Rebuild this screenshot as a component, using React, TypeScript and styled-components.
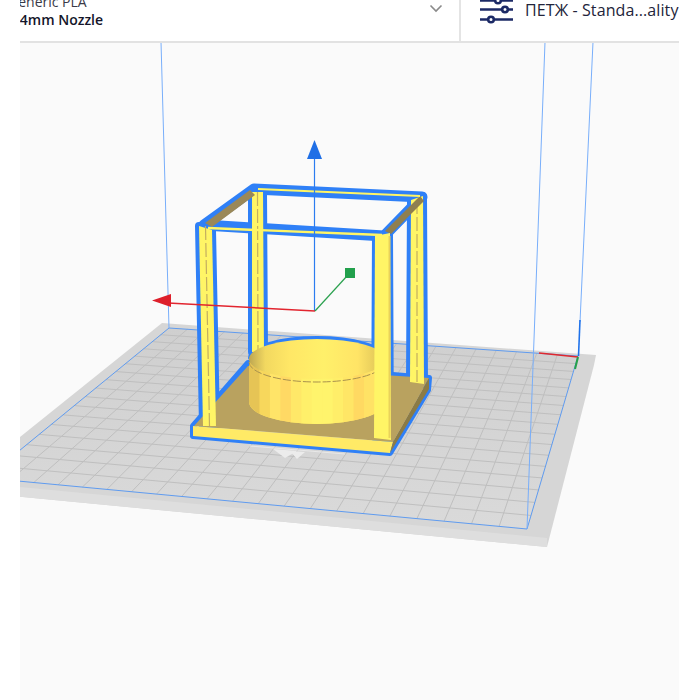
import React from "react";
import styled, { createGlobalStyle } from "styled-components";

const Global = createGlobalStyle`
  html, body { margin: 0; padding: 0; background: #fff; }
  body { font-family: "Open Sans", "Noto Sans", "Liberation Sans", sans-serif; }
`;

const Page = styled.div`
  width: 700px;
  height: 700px;
  padding: 0 21px 0 20px;
  box-sizing: border-box;
  display: flex;
  flex-direction: column;
  overflow: hidden;
  background: #fff;
`;

const Header = styled.header`
  flex: 0 0 43px;
  height: 43px;
  box-sizing: border-box;
  display: flex;
  border-bottom: 2px solid #e2e2e2;
  overflow: hidden;
  background: #fff;
`;

const MaterialPicker = styled.div`
  flex: 0 0 441px;
  box-sizing: border-box;
  display: flex;
  justify-content: space-between;
  border-right: 2px solid #e4e4e4;
  padding-right: 16px;
`;

const MaterialLabels = styled.div`
  margin: -7px 0 0 -12px;
  display: flex;
  flex-direction: column;
  color: #14152a;
  font-size: 14px;
  line-height: 18px;
`;

const MaterialName = styled.span`
  color: #3a3a48;
`;

const NozzleName = styled.span`
  font-weight: 600;
`;

const Chevron = styled.svg`
  margin-top: 4px;
  width: 14px;
  height: 9px;
`;

const ProfilePicker = styled.div`
  flex: 1;
  min-width: 0;
  display: flex;
  gap: 11px;
  padding-left: 19px;
  overflow: hidden;
`;

const SlidersIcon = styled.svg`
  flex: 0 0 34px;
  width: 34px;
  height: 26px;
`;

const ProfileName = styled.span`
  font-size: 16px;
  line-height: 21px;
  color: #22243a;
  white-space: nowrap;
  letter-spacing: 0.1px;
`;

const Viewport = styled.svg`
  flex: 1;
  display: block;
  width: 659px;
  background: #fafafa;
`;

type P = [number, number];
const pts = (a: P[]) => a.map((p) => p.join(",")).join(" ");

// Perspective mapping of the build plate square onto its on-screen quad
const quad: P[] = [[169, 328], [578, 356], [527, 529], [-14, 478]];
function homography(q: P[]) {
  const [[x0, y0], [x1, y1], [x2, y2], [x3, y3]] = q;
  const dx1 = x1 - x2, dx2 = x3 - x2, sx = x0 - x1 + x2 - x3;
  const dy1 = y1 - y2, dy2 = y3 - y2, sy = y0 - y1 + y2 - y3;
  const d = dx1 * dy2 - dx2 * dy1;
  const g = (sx * dy2 - dx2 * sy) / d;
  const h = (dx1 * sy - sx * dy1) / d;
  return (u: number, v: number): P => {
    const w = g * u + h * v + 1;
    return [
      ((x1 - x0 + g * x1) * u + (x3 - x0 + h * x3) * v + x0) / w,
      ((y1 - y0 + g * y1) * u + (y3 - y0 + h * y3) * v + y0) / w,
    ];
  };
}
const map = homography(quad);
const COLS = 21;
const ROWS = 17;
const gridLines: [P, P][] = [];
for (let i = 1; i < COLS; i++) gridLines.push([map(i / COLS, 0), map(i / COLS, 1)]);
for (let i = 1; i < ROWS; i++) gridLines.push([map(0, i / ROWS), map(1, i / ROWS)]);

const BLUE = "#2f80f7";
const YEL = "#fff566";

type Post = { a: P; b: P; c: P; d: P };
const backLeft: Post = { a: [252, 192], b: [263, 192], c: [264, 352], d: [252, 352] };
const backRight: Post = { a: [411, 200], b: [423, 196], c: [424, 384], d: [410, 382] };
const frontLeft: Post = { a: [199, 226], b: [212, 230], c: [216, 426], d: [203, 426] };
const frontRight: Post = { a: [375, 236], b: [390, 233], c: [391, 440], d: [374, 438] };

const cylBands = ["#e6c455", "#f7d75c", "#ffe468", "#ffd964", "#ffe868", "#fff06a", "#fff46c", "#fff46c", "#ffee69", "#ffe666", "#ffd962", "#ffe265", "#f8d65c"];

const CYL = "M249 362 L249 402 A 68 22 0 0 0 385 402 L385 362 Z";

const PostShape = ({ p }: { p: Post }) => {
  const tx = (p.a[0] + p.b[0]) / 2;
  const bx = (p.c[0] + p.d[0]) / 2;
  return (
    <g>
      <polygon points={pts([p.a, p.b, p.c, p.d])} fill={YEL} />
      <line x1={tx} y1={p.a[1]} x2={bx} y2={p.d[1]} stroke="#c4ae60" strokeWidth="1.2" strokeDasharray="14 3" />
    </g>
  );
};

const Scene = () => (
  <Viewport viewBox="20 43 659 657" preserveAspectRatio="xMinYMin slice">
    <defs>
      <linearGradient id="plate" x1="0" y1="0" x2="0" y2="1">
        <stop offset="0" stopColor="#cfcfcf" />
        <stop offset="1" stopColor="#dadada" />
      </linearGradient>
      <linearGradient id="rim" x1="0" y1="0" x2="1" y2="0">
        <stop offset="0" stopColor="#bda651" />
        <stop offset="0.12" stopColor="#f2d860" />
        <stop offset="0.3" stopColor="#ffe766" />
        <stop offset="0.55" stopColor="#fff06a" />
        <stop offset="0.8" stopColor="#ffe466" />
        <stop offset="1" stopColor="#d8be55" />
      </linearGradient>
      <clipPath id="cyl">
        <path d={CYL} />
      </clipPath>
    </defs>

    {/* build plate */}
    <polygon points={pts([[162, 323], [596, 355], [594, 365], [547, 547], [-20, 493], [-20, 469]])} fill="#d6d6d6" />
    <polygon points={pts([[-20, 483], [547, 538], [547, 547], [-20, 493]])} fill="#dedede" />
    <polygon points={pts(quad)} fill="url(#plate)" />
    {gridLines.map(([a, b], i) => (
      <line key={i} x1={a[0]} y1={a[1]} x2={b[0]} y2={b[1]} stroke="#bfbfbf" strokeWidth="1" />
    ))}
    <polygon points={pts(quad)} fill="none" stroke="#5f9bef" strokeWidth="1" />

    {/* build volume */}
    <g fill="none" stroke="#78aefa" strokeWidth="1">
      <line x1="161" y1="42" x2="169" y2="328" />
      <line x1="545" y1="42" x2="527" y2="529" />
      <line x1="593" y1="42" x2="580" y2="322" />
    </g>

    {/* plate origin marks */}
    <line x1="539" y1="353" x2="578" y2="357" stroke="#e0282e" strokeWidth="1.6" />
    <line x1="578" y1="357" x2="575" y2="369" stroke="#25a04a" strokeWidth="2" />
    <line x1="580" y1="320" x2="578.5" y2="356" stroke="#1f72ea" strokeWidth="1.6" />

    {/* selection outline layer */}
    <g fill="none" stroke={BLUE} strokeLinejoin="round" strokeLinecap="round">
      <polygon points={pts([[193, 426], [193, 436], [390, 453], [428, 390], [429, 378], [248, 363]])} strokeWidth="6" />
      <path d="M250 358 A 67 20 0 0 1 384 358" strokeWidth="4" />
      <polyline points={pts([[204, 225], [254, 189], [422, 197], [384, 236], [204, 225]])} strokeWidth="11" />
      {[backLeft, backRight, frontLeft].map((p, i) => (
        <polygon key={i} points={pts([p.a, p.b, p.c, p.d])} strokeWidth="8" />
      ))}
      <polygon points={pts([frontRight.a, frontRight.b, frontRight.c, frontRight.d])} strokeWidth="6" />
    </g>

    {/* model: base plate */}
    <polygon points={pts([[194, 426], [248, 366], [429, 378], [393, 442]])} fill="#b9a25f" />
    <polygon points={pts([[193, 426], [193, 436], [390, 453], [393, 442]])} fill="#ffea66" />
    <polygon points={pts([[393, 442], [390, 453], [429, 389], [429, 378]])} fill="#8b7b45" />

    <PostShape p={backLeft} />
    <PostShape p={backRight} />

    {/* model: cylinder */}
    <path d={CYL} fill="#ffe666" />
    {cylBands.map((c, i) => (
      <rect key={i} x={249 + i * (136 / 13)} y={360} width={136 / 13 + 0.5} height={66} fill={c} clipPath="url(#cyl)" />
    ))}
    <ellipse cx="317" cy="359" rx="68" ry="20" fill="url(#rim)" />
    <path d="M249 362 A 68 20 0 0 0 385 362" fill="none" stroke="#a9924e" strokeWidth="1" strokeDasharray="8 2" />

    {/* glitch marks under the base */}
    <polygon points={pts([[273, 449], [297, 451], [285, 458]])} fill="#ececec" />
    <polygon points={pts([[290, 451], [305, 452], [297, 459]])} fill="#ececec" />
    <line x1="250" y1="446" x2="345" y2="454" stroke="#e8e8e8" strokeWidth="1" />

    {/* model: top frame */}
    <polygon points={pts([[205, 223], [250, 190], [255, 195], [212, 227]])} fill="#9a8858" />
    <polygon points={pts([[385, 231], [420, 196], [424, 201], [391, 234]])} fill="#8f7f50" />
    <line x1="258" y1="189" x2="420" y2="196" stroke={YEL} strokeWidth="2" />
    <line x1="208" y1="228" x2="382" y2="235" stroke={YEL} strokeWidth="2.4" />

    {/* model: front posts */}
    <PostShape p={frontLeft} />
    <polygon points={pts([frontRight.a, frontRight.b, frontRight.c, frontRight.d])} fill={YEL} />
    <line x1="389.5" y1="236" x2="389.5" y2="438" stroke="#e9d25a" strokeWidth="2" />

    {/* gizmo */}
    <line x1="314.5" y1="155" x2="314.5" y2="311" stroke="#2b7cf0" strokeWidth="1.2" />
    <polygon points={pts([[314.5, 140], [322, 159], [307, 159]])} fill="#1f6fe6" />
    <line x1="168" y1="303" x2="315" y2="311" stroke="#e2252f" strokeWidth="1.4" />
    <polygon points={pts([[152, 300.5], [171, 294], [171, 307]])} fill="#dd1f2b" />
    <line x1="315" y1="311" x2="347" y2="276" stroke="#2ba14f" strokeWidth="1.2" />
    <rect x="345" y="268" width="10" height="10" fill="#22a04c" />
  </Viewport>
);

export default function App() {
  return (
    <Page>
      <Global />
      <Header>
        <MaterialPicker>
          <MaterialLabels>
            <MaterialName>Generic PLA</MaterialName>
            <NozzleName>0.4mm Nozzle</NozzleName>
          </MaterialLabels>
          <Chevron viewBox="0 0 14 9">
            <path d="M1.5 1.5 L7 7 L12.5 1.5" fill="none" stroke="#8a8a8a" strokeWidth="1.6" />
          </Chevron>
        </MaterialPicker>
        <ProfilePicker>
          <SlidersIcon viewBox="0 0 34 26" fill="none" stroke="#1c2a66" strokeWidth="2.6">
            <path d="M0 0.5H33M0 9.5H33M0 19.5H33" />
            <circle cx="18" cy="0.5" r="2.8" fill="#fff" />
            <circle cx="25" cy="9.5" r="2.8" fill="#fff" />
            <circle cx="11" cy="19.5" r="2.8" fill="#fff" />
          </SlidersIcon>
          <ProfileName>ПЕТЖ - Standa...ality</ProfileName>
        </ProfilePicker>
      </Header>
      <Scene />
    </Page>
  );
}
